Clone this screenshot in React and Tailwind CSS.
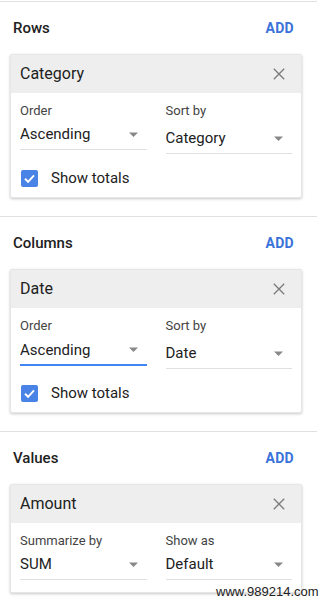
import React from "react";

const Arrow = () => (
  <svg width="9" height="5" viewBox="0 0 9 5" className="shrink-0">
    <polygon points="0,0.5 9,0.5 4.5,5" fill="#888888" />
  </svg>
);

const CloseIcon = () => (
  <svg width="12" height="12" viewBox="0 0 12 12">
    <path d="M0.8 0.8 L11.2 11.2 M11.2 0.8 L0.8 11.2" stroke="#7a7a7a" strokeWidth="1.3" fill="none" />
  </svg>
);

const Checkbox = () => (
  <div className="w-[17px] h-[17px] rounded-[2px] bg-[#4a83e6] flex items-center justify-center">
    <svg width="13" height="13" viewBox="0 0 13 13">
      <path d="M2 6.8 L5.1 9.8 L11 3.4" stroke="#ffffff" strokeWidth="1.9" fill="none" />
    </svg>
  </div>
);

function Field({ label, value, active, offset }) {
  return (
    <div className="flex flex-col">
      <div className="text-[13px] leading-[16px] text-[#444444] mb-[5px]">{label}</div>
      <div
        className={
          "flex items-center justify-between pr-[9px] " +
          (offset ? "mt-[4px] " : "") +
          (active
            ? "h-[27px] border-b-2 border-[#4285f4] pb-[4px]"
            : "h-[26px] border-b border-[#e0e0e0] pb-[5px]")
        }
      >
        <span className="text-[15px] leading-[20px] text-[#212121]">{value}</span>
        <Arrow />
      </div>
    </div>
  );
}

function Card({ title, left, right, showTotals, activeLeft, rightOffset }) {
  return (
    <div className="mx-[10px] w-[292px] bg-white rounded-[2px] border border-[#e6e6e6] shadow-[0_1px_3px_rgba(0,0,0,0.22)] overflow-hidden">
      <div className="h-[38px] bg-[#eeeeee] flex items-center justify-between pl-[9px] pr-[16px]">
        <span className="text-[16px] text-[#212121]">{title}</span>
        <CloseIcon />
      </div>
      <div className={"px-[9px] pt-[10px] " + (showTotals ? "pb-[10px]" : "pb-[12px]")}>
        <div className="grid grid-cols-2 gap-x-[19px] items-start">
          <Field label={left[0]} value={left[1]} active={activeLeft} />
          <Field label={right[0]} value={right[1]} offset={rightOffset} />
        </div>
        {showTotals && (
          <div className="flex items-center mt-[16px] pl-[1px]">
            <Checkbox />
            <span className="ml-[13px] text-[15px] leading-[17px] text-[#212121]">Show totals</span>
          </div>
        )}
      </div>
    </div>
  );
}

function Section({ heading, children, last }) {
  return (
    <div className={last ? "" : "pb-[18px]"}>
      <div className="w-[317px] h-px bg-[#e0e0e0]" />
      <div className="h-[52px] flex items-center justify-between pl-[13px] pr-[28px]">
        <span className="text-[15px] font-medium text-[#212121]">{heading}</span>
        <span className="text-[14px] font-bold text-[#3a72da] tracking-[0.3px]">ADD</span>
      </div>
      {children}
    </div>
  );
}

export default function App() {
  return (
    <div
      className="relative w-[322px] h-[600px] bg-white pt-[1px] overflow-hidden"
      style={{ fontFamily: "Roboto, 'Liberation Sans', Arial, sans-serif" }}
    >
      <Section heading="Rows">
        <Card
          title="Category"
          left={["Order", "Ascending"]}
          right={["Sort by", "Category"]}
          showTotals
          rightOffset
        />
      </Section>
      <Section heading="Columns">
        <Card
          title="Date"
          left={["Order", "Ascending"]}
          right={["Sort by", "Date"]}
          showTotals
          activeLeft
          rightOffset
        />
      </Section>
      <Section heading="Values" last>
        <Card
          title="Amount"
          left={["Summarize by", "SUM"]}
          right={["Show as", "Default"]}
        />
      </Section>
      <div
        className="absolute left-[216px] top-[585px] text-[13px] leading-[14px] text-[#222222]"
        style={{ fontFamily: "'Liberation Sans', Arial, sans-serif" }}
      >
        www.989214.com
      </div>
    </div>
  );
}
